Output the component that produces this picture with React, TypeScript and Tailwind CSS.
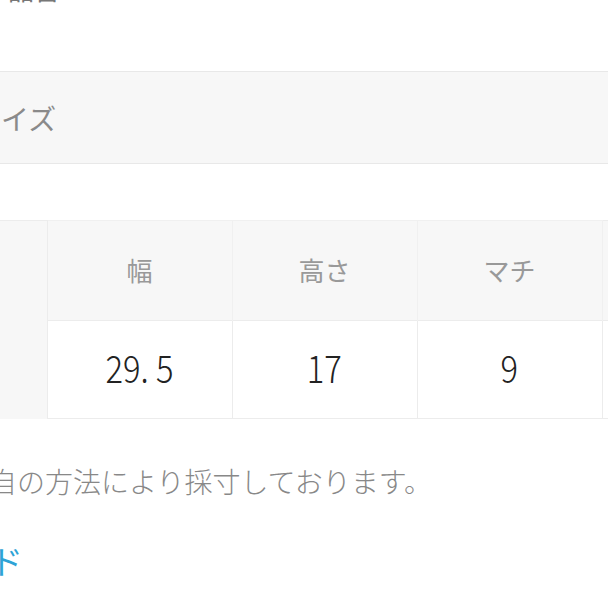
export default function App() {
  const jp = "font-['Noto_Sans_CJK_JP','Noto_Sans',sans-serif]";
  return (
    <div className={`w-[608px] h-[608px] overflow-hidden bg-white ${jp}`}>
      {/* top row, mostly scrolled off */}
      <div className="flex h-[30px] -mt-[26px] text-[26px] leading-[30px] text-[#777]">
        <span className="ml-[8px] w-[152px]">品番</span>
        <span className="tracking-[4px]">0000000</span>
      </div>

      {/* section header */}
      <div className="mt-[67px] h-[93px] bg-[#f7f7f7] border-y border-[#e8e8e8] flex items-center">
        <h2 className="-ml-[27px] text-[28px] text-[#8a8a8a] font-normal">サイズ</h2>
      </div>

      {/* size table */}
      <table className="mt-[56px] border-collapse table-fixed w-[620px]">
        <tbody>
          <tr className="h-[100px] bg-[#f7f7f7]">
            <th rowSpan={2} className="w-[47px] border-t border-r border-[#ececec] bg-[#f7f7f7]"></th>
            {["幅", "高さ", "マチ"].map((h) => (
              <th key={h} className="w-[185px] border-t border-x border-[#f0f0f0] text-[26px] font-normal text-[#999] pb-[2px]">
                {h}
              </th>
            ))}
            <th className="border-t border-[#ececec]"></th>
          </tr>
          <tr className="h-[98px] bg-white">
            {["29. 5", "17", "9"].map((v) => (
              <td key={v} className="border border-[#ececec] text-center pb-[6px]">
                <span className="inline-block scale-x-[0.86] text-[38px] font-light text-[#222] whitespace-pre">{v}</span>
              </td>
            ))}
            <td className="border-y border-[#ececec]"></td>
          </tr>
        </tbody>
      </table>

      <p className="mt-[45px] -ml-[39px] whitespace-nowrap text-[28px] leading-[34px] font-light text-[#888]">
        独自の方法により採寸しております。
      </p>

      <h3 className="mt-[42px] -ml-[76px] whitespace-nowrap text-[33px] leading-[40px] text-[#2ea3d6] font-normal">
        ガイド
      </h3>
    </div>
  );
}
